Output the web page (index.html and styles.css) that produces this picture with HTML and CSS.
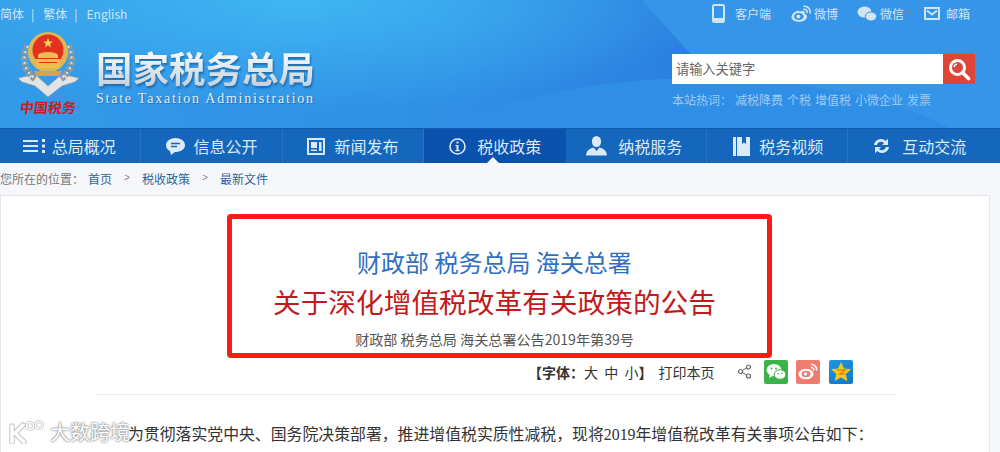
FILE: index.html
```html
<!DOCTYPE html>
<html lang="zh-CN">
<head>
<meta charset="utf-8">
<title>国家税务总局</title>
<link rel="stylesheet" href="styles.css">
</head>
<body>
<header class="masthead">
  <div class="top-row">
    <div class="lang"><span>简体</span><i>|</i><span class="l2">繁体</span><i>|</i><span class="l3">English</span></div>
    <div class="tools">
      <span class="tool t1"><svg width="13" height="19" viewBox="0 0 13 19"><rect x="1" y="1" width="11" height="17" rx="1.5" fill="none" stroke="#cfe5f8" stroke-width="2"/><rect x="1" y="14" width="11" height="4" fill="#cfe5f8"/></svg><b>客户端</b></span>
      <span class="tool t2"><svg width="20" height="17" viewBox="0 0 20 17"><path d="M8 5.500C4 6 .5 9 .5 12c0 3 3.500 4.800 7.500 4.800s8-2 8-5.300c0-1.700-1.500-2.300-2.500-2.700.8-2 0-4-4-2.500-1 .3-1 .2-1.500.2z" fill="#cfe5f8"/><ellipse cx="7.800" cy="11.500" rx="4.800" ry="3.500" fill="#3391e6"/><circle cx="7.400" cy="11.600" r="2" fill="#cfe5f8"/><path d="M13 1.300a5.500 5.500 0 0 1 6 6.700M13 4.300a2.600 2.600 0 0 1 3 3.200" fill="none" stroke="#cfe5f8" stroke-width="1.600" stroke-linecap="round"/></svg><b>微博</b></span>
      <span class="tool t3"><svg width="20" height="16" viewBox="0 0 20 16"><ellipse cx="7.500" cy="6" rx="7" ry="5.600" fill="#cfe5f8"/><ellipse cx="14" cy="10.500" rx="5.600" ry="4.600" fill="#cfe5f8" stroke="#3391e6"/></svg><b>微信</b></span>
      <span class="tool t4"><svg width="16" height="13" viewBox="0 0 16 13"><rect x="1" y="1" width="14" height="11" fill="none" stroke="#cfe5f8" stroke-width="2"/><path d="M3 3.500l5 4 5-4" fill="none" stroke="#cfe5f8" stroke-width="1.800"/></svg><b>邮箱</b></span>
    </div>
  </div>
  <div class="brand-row">
    <div class="emblem">
      <svg width="64" height="67" viewBox="0 0 64 67">
        <path d="M1 48L18 44 31 56 45 44 62 48 58 52 45 56 31 67 18 56 5 52z" fill="#dfe4e6" stroke="#8d979b" stroke-width=".8"/>
        <path d="M11 16C4 28 7 42 19 49M51 16c7 12 4 26-8 33" fill="none" stroke="#8e9a9c" stroke-width="7" stroke-dasharray="4 1.500"/>
        <path d="M11 16C4 28 7 42 19 49M51 16c7 12 4 26-8 33" fill="none" stroke="#dfe4e6" stroke-width="2" stroke-dasharray="2 3.500"/>
        <circle cx="31" cy="22" r="20" fill="#dcb758"/>
        <circle cx="31" cy="20" r="15.500" fill="#e1321f"/>
        <path d="M31 8l1.300 3.600H36l-3 2.300 1.100 3.600-3.100-2.200-3.100 2.200 1.100-3.600-3-2.300h3.700z" fill="#f3d45c"/>
        <path d="M21 25a10 3 0 0 1 20 0v3H21zM19 29h24v3H19zM18 33h26l-3 5H21z" fill="#eebf4e"/>
        <path d="M17 41h28l-3 5H20z" fill="#c7a95a"/>
      </svg>
      <span class="seal-text">中国税务</span>
    </div>
    <div class="brand-text">
      <div class="brand-cn">国家税务总局</div>
      <div class="brand-en">State Taxation Administration</div>
    </div>
    <div class="search-block">
      <div class="search">
        <span class="search-input">请输入关键字</span>
        <span class="search-btn"><svg width="24" height="24" viewBox="0 0 24 24"><circle cx="10.500" cy="10.500" r="7" fill="none" stroke="#fff" stroke-width="3"/><path d="M15.500 15.500l6 6" stroke="#fff" stroke-width="3.600" stroke-linecap="round"/><path d="M7 10a4 4 0 0 1 3-3" fill="none" stroke="#fff" stroke-width="1.500"/></svg></span>
      </div>
      <div class="hot"><span class="hot-label">本站热词：</span><span>减税降费</span><span>个税</span><span>增值税</span><span>小微企业</span><span>发票</span></div>
    </div>
  </div>
</header>
<nav class="nav">
  <a class="nav-item n1"><svg width="24" height="16" viewBox="0 0 24 16"><path d="M1 2h15v2H1zM1 7h15v2H1zM1 12h15v2H1zM20 1h3v3h-3zM20 6.500h3v3h-3zM20 12h3v3h-3z" fill="#dce9f6"/></svg>总局概况</a>
  <a class="nav-item n2"><svg width="19" height="17" viewBox="0 0 19 17"><path d="M9.500 0C4.500 0 0 3 0 7.300 0 10 1.600 12 4 13.200L5 17l4-3c5.500 0 10-2.800 10-6.800C19 3 14.500 0 9.500 0z" fill="#dce9f6"/><path d="M5 5.500h9M5 8.500h6" stroke="#1567bd" stroke-width="1.500"/></svg>信息公开</a>
  <a class="nav-item n3"><svg width="18" height="17" viewBox="0 0 18 17"><rect x="1" y="1" width="16" height="15" fill="none" stroke="#dce9f6" stroke-width="2"/><path d="M4 4h6v6H4zM12 4h2.500v9H12zM4 11.500h6V13H4z" fill="#dce9f6"/></svg>新闻发布</a>
  <a class="nav-item n4 active"><svg width="17" height="17" viewBox="0 0 17 17"><circle cx="8.500" cy="8.500" r="7.500" fill="none" stroke="#dce9f6" stroke-width="1.600"/><path d="M7.500 3.500h2v2h-2zM6.500 7h3v5h1.200v1.300H6.300V12h1.200V8.300h-1z" fill="#dce9f6"/></svg>税收政策</a>
  <a class="nav-item n5"><svg width="21" height="20" viewBox="0 0 21 20"><ellipse cx="10.500" cy="5.500" rx="4.600" ry="5.500" fill="#dce9f6"/><path d="M0 19.500c.5-5 3.500-7 7.500-8l3 3.500 3-3.500c4 1 7 3 7.500 8z" fill="#dce9f6"/></svg>纳税服务</a>
  <a class="nav-item n6"><svg width="17" height="19" viewBox="0 0 17 19"><path d="M0 0h3v19H0zM4 0h5v7l2-1.500L13 7V0h4v19H4z" fill="#dce9f6"/></svg>税务视频</a>
  <a class="nav-item n7"><svg width="17" height="16" viewBox="0 0 17 16"><path d="M1 7c.5-3.500 3.500-6 7-6 2 0 3.500.8 4.700 2L15 .8V7H9l2-2C10.200 4.200 9.200 3.800 8 3.800 6 3.800 4.600 5 4 7zM16 9c-.5 3.500-3.500 6-7 6-2 0-3.500-.8-4.700-2L2 15.200V9h6l-2 2c.8.800 1.800 1.200 3 1.200 2 0 3.400-1.200 4-3.200z" fill="#dce9f6"/></svg>互动交流</a>
</nav>
<div class="crumb-bar">
  <div class="crumbs"><span class="here">您所在的位置：</span><a>首页</a><em>&gt;</em><a>税收政策</a><em>&gt;</em><a>最新文件</a></div>
  <span class="caret"></span>
</div>
<main class="sheet">
  <section class="callout">
    <h2 class="issuer">财政部 税务总局 海关总署</h2>
    <h1 class="headline">关于深化增值税改革有关政策的公告</h1>
    <p class="docno">财政部 税务总局 海关总署公告2019年第39号</p>
  </section>
  <div class="actions">
    <span class="font-size"><b>【字体：</b>大&nbsp;&nbsp;中&nbsp;&nbsp;小<b>】</b></span>
    <span class="print">打印本页</span>
    <svg class="share" width="15" height="15" viewBox="0 0 15 15"><path d="M11.500 3L3.500 7.500l8 4.500" fill="none" stroke="#666"/><circle cx="11.500" cy="3" r="2" fill="#fff" stroke="#666" stroke-width="1.200"/><circle cx="3.500" cy="7.500" r="2" fill="#fff" stroke="#666" stroke-width="1.200"/><circle cx="11.500" cy="12" r="2" fill="#fff" stroke="#666" stroke-width="1.200"/></svg>
    <span class="social wechat"><svg width="20" height="18" viewBox="0 0 20 18"><ellipse cx="8" cy="7" rx="7.500" ry="6" fill="#fff"/><path d="M4 11l-1 4 4-2z" fill="#fff"/><ellipse cx="14" cy="11.500" rx="5.800" ry="4.800" fill="#fff" stroke="#3cb34a"/><circle cx="5.500" cy="5.500" r="1" fill="#3cb34a"/><circle cx="10" cy="5.500" r="1" fill="#3cb34a"/><circle cx="12" cy="10.500" r=".8" fill="#3cb34a"/><circle cx="16" cy="10.500" r=".8" fill="#3cb34a"/></svg></span>
    <span class="social weibo"><svg width="20" height="17" viewBox="0 0 20 17"><ellipse cx="8" cy="11" rx="7.500" ry="5.200" fill="#fff"/><ellipse cx="8" cy="11" rx="4.500" ry="3.200" fill="#ee7d70"/><circle cx="7.500" cy="11" r="1.700" fill="#fff"/><path d="M13 1.500a5 5 0 0 1 5.500 6M13 4.500a2.400 2.400 0 0 1 2.600 3" fill="none" stroke="#fff" stroke-width="1.600"/></svg></span>
    <span class="social qzone"><svg width="20" height="19" viewBox="0 0 20 19"><path d="M10 0l3 6.500 7 .8-5.200 4.700 1.500 7L10 15.400 3.700 19l1.500-7L0 7.300l7-.8z" fill="#f8c521"/><path d="M6 8h8l-5 4h5" fill="none" stroke="#e8820e" stroke-width="1.500"/></svg></span>
  </div>
  <hr class="rule">
  <p class="lede">为贯彻落实党中央、国务院决策部署，推进增值税实质性减税，现将2019年增值税改革有关事项公告如下：</p>
</main>
<div class="watermark"><svg width="40" height="24" viewBox="0 0 40 24"><g fill="none" stroke-linecap="round" stroke-linejoin="round"><g stroke="#c4c4c4"><path d="M4 6v16M15 5L7 13l9 9" stroke-width="5.500"/><circle cx="22" cy="6" r="3.500" stroke-width="3"/><circle cx="31" cy="5" r="3.500" stroke-width="3"/></g><g stroke="#fff"><path d="M4 6v16M15 5L7 13l9 9" stroke-width="3.500"/><circle cx="22" cy="6" r="3.500" stroke-width="1.500"/><circle cx="31" cy="5" r="3.500" stroke-width="1.500"/></g></g></svg><span>大数跨境</span></div>
</body>
</html>
```
FILE: styles.css
```css
* { box-sizing: border-box; }
html, body { margin: 0; padding: 0; }
body {
  width: 1000px;
  height: 452px;
  overflow: hidden;
  position: relative;
  background: #f5f7fa;
  font-family: "Noto Sans CJK SC", "Noto Sans", sans-serif;
}
.masthead {
  height: 128px;
  background:
    radial-gradient(310px 122px at 700px 200px, #2f8ee6 99.500%, rgba(47,142,230,0) 100%),
    linear-gradient(47.700deg, rgba(53,149,232,0) 67.800%, #3595e8 68%),
    radial-gradient(ellipse 420px 110px at 300px 0, #40b6f2 0, rgba(64,182,242,0) 100%),
    linear-gradient(to right, #339ae8 0, #2f90e6 45%, #2b80e0 68%);
}
.top-row {
  height: 27px;
  display: flex;
  justify-content: space-between;
  align-items: center;
  font-size: 12px;
  color: #cfe5f8;
}
.lang { display: flex; align-items: center; }
.lang i { font-style: normal; margin-left: 7px; }
.lang .l2 { margin-left: 9px; }
.lang .l3 { margin-left: 9px; }
.tools { display: flex; align-items: center; padding-right: 30px; }
.tool { display: flex; align-items: center; }
.tool b { font-weight: 400; font-size: 12px; }
.t1 svg { margin-right: 10px; }
.t2 { margin-left: 20px; }
.t2 svg, .t3 svg { margin-right: 3px; }
.t3 { margin-left: 19px; }
.t4 { margin-left: 20px; }
.t4 svg { margin-right: 6px; }
.brand-row { display: flex; height: 101px; }
.emblem {
  width: 96px;
  padding: 3px 0 0 17px;
}
.emblem svg { display: block; }
.seal-text {
  display: block;
  margin: 1px 0 0 3px;
  width: 60px;
  font-size: 14px;
  line-height: 18px;
  font-weight: 700;
  color: #c81e1e;
  transform: skewX(-8deg);
  white-space: nowrap;
}
.brand-text { width: 576px; padding-top: 19px; }
.brand-cn {
  font-size: 36.500px;
  line-height: 44px;
  font-weight: 700;
  background: linear-gradient(#f4f8fb 20%, #c5d2dd 90%);
  -webkit-background-clip: text;
  background-clip: text;
  color: transparent;
  filter: drop-shadow(1px 2px 1px rgba(10,60,120,.55));
  white-space: nowrap;
}
.brand-en {
  font-family: "Liberation Serif", serif;
  font-size: 14px;
  line-height: 16px;
  margin-top: 1px;
  letter-spacing: 1.770px;
  color: #e3edf5;
  text-shadow: 1px 1px 1px rgba(10,60,120,.5);
  white-space: nowrap;
}
.search-block { width: 303px; padding-top: 27px; }
.search { display: flex; height: 30px; width: 303px; background: #fff; }
.search-input {
  flex: 1;
  padding-left: 4px;
  font-size: 13.200px;
  line-height: 29px;
  color: #666;
}
.search-btn {
  width: 32px;
  background: #dd4636;
  display: flex;
  align-items: center;
  justify-content: center;
}
.hot {
  display: flex;
  gap: 4px;
  margin-top: 7px;
  font-size: 12px;
  line-height: 18px;
  color: #9dccf2;
  white-space: nowrap;
}
.hot-label { margin-right: -1px; width: 60px; }
.nav {
  height: 35px;
  display: flex;
  background: #1567bd;
  border-top: 1px solid #0f5cae;
}
.nav-item {
  width: 141.400px;
  flex: none;
  display: flex;
  align-items: center;
  justify-content: center;
  gap: 9px;
  color: #dce9f6;
  font-size: 16px;
  border-right: 1px solid #2a75c3;
}
.n1 { gap: 6px; padding-right: 3px; }
.n4 { gap: 11px; padding-left: 2px; }
.n5 { gap: 11px; padding-right: 3px; }
.n6 { padding-left: 2px; }
.n7 { gap: 12px; width: 152px; padding-right: 9px; border-right: 0; }
.nav-item.active { background: #0b52ae; border-right-color: #0b52ae; }
.crumb-bar { height: 32px; position: relative; }
.crumbs {
  display: flex;
  align-items: center;
  height: 30px;
  font-size: 12px;
  color: #777;
}
.crumbs a { color: #2f6396; }
.here { margin-right: 4px; }
.crumbs em { font-style: normal; color: #888; margin: 0 12px 0 12px; font-family: "Liberation Mono", monospace; font-size: 10px; }
.caret {
  position: absolute;
  left: 487px;
  top: -6px;
  width: 0;
  height: 0;
  border: 6px solid transparent;
  border-top: 0;
  border-bottom-color: #f5f7fa;
}
.sheet {
  width: 990px;
  height: 257px;
  background: #fff;
  border: 1px solid #e4e6e8;
  border-bottom: 0;
  overflow: hidden;
}
.callout {
  width: 545px;
  height: 144px;
  margin: 18px 0 0 226px;
  padding-right: 10px;
  border: 5px solid #fb1b14;
  border-radius: 4px;
  text-align: center;
  background: #fff;
}
.issuer {
  margin: 0;
  padding-top: 25px;
  font-size: 24px;
  line-height: 36px;
  font-weight: 400;
  color: #2f6fc0;
  white-space: nowrap;
}
.headline {
  margin: 0;
  padding-top: 2px;
  font-size: 27.700px;
  line-height: 38px;
  font-weight: 400;
  color: #c2191c;
  white-space: nowrap;
}
.docno {
  margin: 0;
  padding-top: 9px;
  font-size: 14.100px;
  line-height: 20px;
  color: #555;
  white-space: nowrap;
}
.actions {
  display: flex;
  align-items: center;
  height: 27px;
  padding-left: 527px;
  font-size: 14px;
  color: #333;
}
.font-size b { font-weight: 700; }
.print { margin-left: 6px; }
.share { margin-left: 22px; }
.social {
  width: 24px;
  height: 24px;
  margin-left: 8px;
  border-radius: 2px;
  display: flex;
  align-items: center;
  justify-content: center;
}
.share + .social { margin-left: 12px; }
.qzone { margin-left: 9px; }
.wechat { background: #3cb34a; }
.weibo { background: #ee7d70; }
.qzone { background: linear-gradient(160deg, #1c97e0, #1677c4); }
.rule {
  margin: 9px 0 0 95px;
  width: 800px;
  height: 1px;
  border: 0;
  background: #eeeeee;
}
.lede {
  margin: 28px 0 0 127px;
  font-family: "Liberation Serif", "Noto Sans CJK SC", serif;
  font-size: 15.870px;
  line-height: 24px;
  font-weight: 400;
  color: #333;
  white-space: nowrap;
}
.watermark {
  position: absolute;
  left: 8px;
  top: 419px;
  display: flex;
  align-items: center;
  gap: 2px;
  color: #fff;
  font-size: 20px;
  line-height: 26px;
  text-shadow: 0 0 1px #888, 0 0 2px #999, 0 0 3px #aaa;
}
```
